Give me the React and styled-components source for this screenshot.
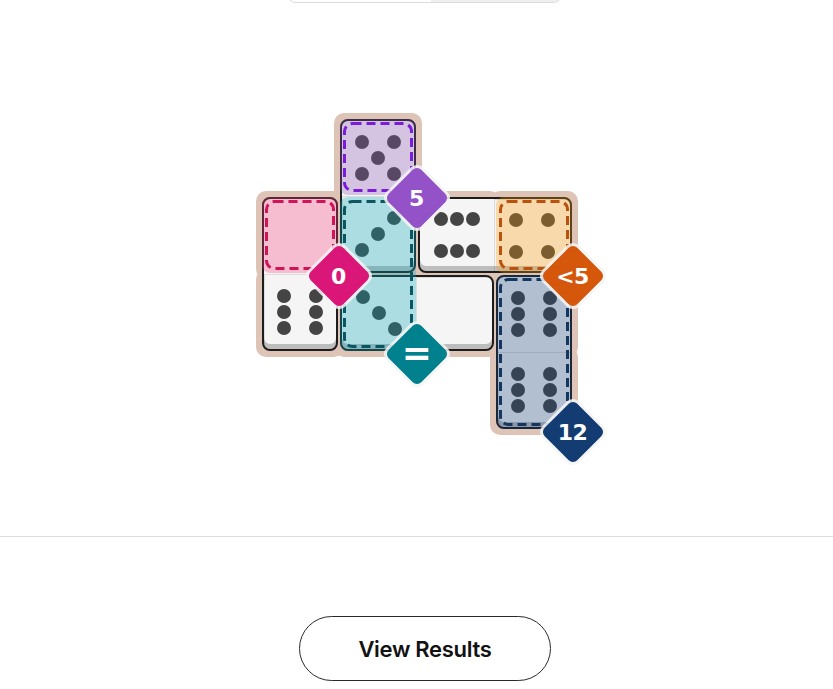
import styled, { createGlobalStyle } from "styled-components";

const GlobalStyle = createGlobalStyle`
  body {
    margin: 0;
    background: #fff;
    font-family: "Liberation Sans", Arial, sans-serif;
  }
`;

// board cells that exist (row, col), 0 based
const SLOTS = [
  [0, 1],
  [1, 0], [1, 1], [1, 2], [1, 3],
  [2, 0], [2, 1], [2, 2], [2, 3],
  [3, 3],
];

// pip spots in a 3x3 grid, row-major
const FACES = {
  blank: [],
  diag: [0, 4, 8],
  anti: [2, 4, 6],
  four: [0, 2, 6, 8],
  five: [0, 2, 4, 6, 8],
  sixV: [0, 2, 3, 5, 6, 8],
  sixH: [0, 1, 2, 6, 7, 8],
};

const DOMINOES = [
  { row: 0, col: 1, vertical: true, faces: ["five", "anti"] },
  { row: 1, col: 2, vertical: false, faces: ["sixH", "four"] },
  { row: 1, col: 0, vertical: true, faces: ["blank", "sixV"] },
  { row: 2, col: 1, vertical: false, faces: ["diag", "blank"] },
  { row: 2, col: 3, vertical: true, faces: ["sixV", "sixV"] },
];

const REGIONS = [
  { row: 0, col: 1, rs: 1, cs: 1, fill: "rgba(138, 78, 182, 0.3)", dash: "#7b1dd6", badge: "#9452c9", label: "5" },
  { row: 1, col: 0, rs: 1, cs: 1, fill: "rgba(248, 55, 122, 0.3)", dash: "#cf1459", badge: "#da1778", label: "0" },
  { row: 1, col: 1, rs: 2, cs: 1, fill: "rgba(2, 165, 185, 0.3)", dash: "#0c5661", badge: "#01808e", label: "=", big: true },
  { row: 1, col: 3, rs: 1, cs: 1, fill: "rgba(255, 152, 0, 0.3)", dash: "#b9520f", badge: "#d4570b", label: "<5" },
  { row: 2, col: 3, rs: 2, cs: 1, fill: "rgba(22, 65, 122, 0.3)", dash: "#14375f", badge: "#133d72", label: "12" },
];

const Page = styled.div`
  display: flex;
  flex-direction: column;
  min-height: 689px;
  overflow: hidden;
`;

const TabStub = styled.div`
  display: flex;
  align-self: center;
  width: 269px;
  height: 40px;
  margin: -38px 0 0 16px;
  border: 1px solid #dcdcdc;
  border-top: none;
  border-radius: 0 0 6px 6px;
  overflow: hidden;
`;

const TabHalf = styled.div`
  flex: 0 0 ${(p) => p.$w}px;
  background: ${(p) => (p.$active ? "#fff" : "#efefef")};
`;

const BoardArea = styled.section`
  display: flex;
  justify-content: center;
  padding: 115px 0 106px;
  border-bottom: 1px solid #dedede;
`;

const Board = styled.div`
  display: grid;
  grid-template-columns: repeat(4, 78px);
  grid-template-rows: repeat(4, 78px);
`;

const Slot = styled.div`
  grid-row: ${(p) => p.$row + 1};
  grid-column: ${(p) => p.$col + 1};
  margin: -5px;
  background: #dec4b7;
  border-radius: 10px;
`;

const Domino = styled.div`
  grid-row: ${(p) => p.$row + 1} / span ${(p) => (p.$vertical ? 2 : 1)};
  grid-column: ${(p) => p.$col + 1} / span ${(p) => (p.$vertical ? 1 : 2)};
  margin: 1px;
  display: flex;
  flex-direction: ${(p) => (p.$vertical ? "column" : "row")};
  background: #f5f5f5;
  border: 2px solid #1d1d1d;
  border-radius: 8px;
  box-shadow: inset 0 -5px 0 #bdbdbd;
  overflow: hidden;
`;

const Half = styled.div`
  flex: 1;
  display: grid;
  place-items: center;
  & + & {
    ${(p) => (p.$vertical ? "border-top" : "border-left")}: 1px solid rgba(0, 0, 0, 0.1);
  }
`;

const PipGrid = styled.div`
  display: grid;
  grid-template-columns: repeat(3, 16px);
  grid-template-rows: repeat(3, 16px);
  place-items: center;
`;

const Pip = styled.span`
  width: 14px;
  height: 14px;
  border-radius: 50%;
  background: ${(p) => (p.$on ? "#444" : "transparent")};
`;

const Region = styled.div`
  grid-row: ${(p) => p.$row + 1} / span ${(p) => p.$rs};
  grid-column: ${(p) => p.$col + 1} / span ${(p) => p.$cs};
  margin: 1px;
  position: relative;
  border-radius: 8px;
  background: ${(p) => p.$fill};
  pointer-events: none;
`;

// dashed outline of a region, drawn so the dash length matches
const Outline = styled.svg`
  position: absolute;
  inset: 3px;
  width: calc(100% - 6px);
  height: calc(100% - 6px);
  overflow: visible;
  rect {
    x: 1.5px;
    y: 1.5px;
    width: calc(100% - 3px);
    height: calc(100% - 3px);
    rx: 8px;
    fill: none;
    stroke: ${(p) => p.$dash};
    stroke-width: 3px;
    stroke-dasharray: 9 5;
  }
`;

const BadgeAnchor = styled.div`
  grid-row: ${(p) => p.$row};
  grid-column: ${(p) => p.$col};
  justify-self: end;
  align-self: end;
  width: 0;
  height: 0;
  position: relative;
  z-index: 3;
`;

const Diamond = styled.div`
  position: absolute;
  left: 0;
  top: 2px;
  width: 46px;
  height: 46px;
  border-radius: 6px;
  background: ${(p) => p.$color};
  box-shadow: 0 0 0 3px rgba(245, 245, 245, 0.85);
  transform: translate(-50%, -50%) rotate(45deg);
`;

const BadgeLabel = styled.span`
  position: absolute;
  left: 0;
  top: ${(p) => (p.$big ? 1 : 3)}px;
  transform: translate(-50%, -50%);
  color: #fff;
  font-family: "DejaVu Sans", sans-serif;
  font-weight: 700;
  font-size: ${(p) => (p.$big ? 36 : 22)}px;
  letter-spacing: -0.5px;
  white-space: nowrap;
  line-height: 1;
`;

const ActionArea = styled.div`
  display: flex;
  justify-content: center;
  padding: 79px 0 0 17px;
`;

const ResultsButton = styled.button`
  width: 252px;
  height: 65px;
  border: 1px solid #2a2a2a;
  border-radius: 33px;
  background: #fff;
  color: #121212;
  font-family: Inter, "Liberation Sans", sans-serif;
  font-weight: 600;
  font-size: 22px;
  letter-spacing: -0.3px;
  cursor: pointer;
`;

const Face = ({ name, vertical }) => (
  <Half $vertical={vertical}>
    <PipGrid>
      {Array.from({ length: 9 }, (_, i) => (
        <Pip key={i} $on={FACES[name].includes(i)} />
      ))}
    </PipGrid>
  </Half>
);

export default function App() {
  return (
    <Page>
      <GlobalStyle />
      <TabStub>
        <TabHalf $w={141} $active />
        <TabHalf $w={128} />
      </TabStub>

      <BoardArea>
        <Board>
          {SLOTS.map(([r, c]) => (
            <Slot key={`s${r}${c}`} $row={r} $col={c} />
          ))}
          {DOMINOES.map((d) => (
            <Domino key={`d${d.row}${d.col}`} $row={d.row} $col={d.col} $vertical={d.vertical}>
              {d.faces.map((f, i) => (
                <Face key={i} name={f} vertical={d.vertical} />
              ))}
            </Domino>
          ))}
          {REGIONS.map((g) => (
            <Region
              key={`r${g.row}${g.col}`}
              $row={g.row}
              $col={g.col}
              $rs={g.rs}
              $cs={g.cs}
              $fill={g.fill}
            >
              <Outline $dash={g.dash}>
                <rect />
              </Outline>
            </Region>
          ))}
          {REGIONS.map((g) => (
            <BadgeAnchor key={`b${g.row}${g.col}`} $row={g.row + g.rs} $col={g.col + g.cs}>
              <Diamond $color={g.badge} />
              <BadgeLabel $big={g.big}>{g.label}</BadgeLabel>
            </BadgeAnchor>
          ))}
        </Board>
      </BoardArea>

      <ActionArea>
        <ResultsButton>View Results</ResultsButton>
      </ActionArea>
    </Page>
  );
}
